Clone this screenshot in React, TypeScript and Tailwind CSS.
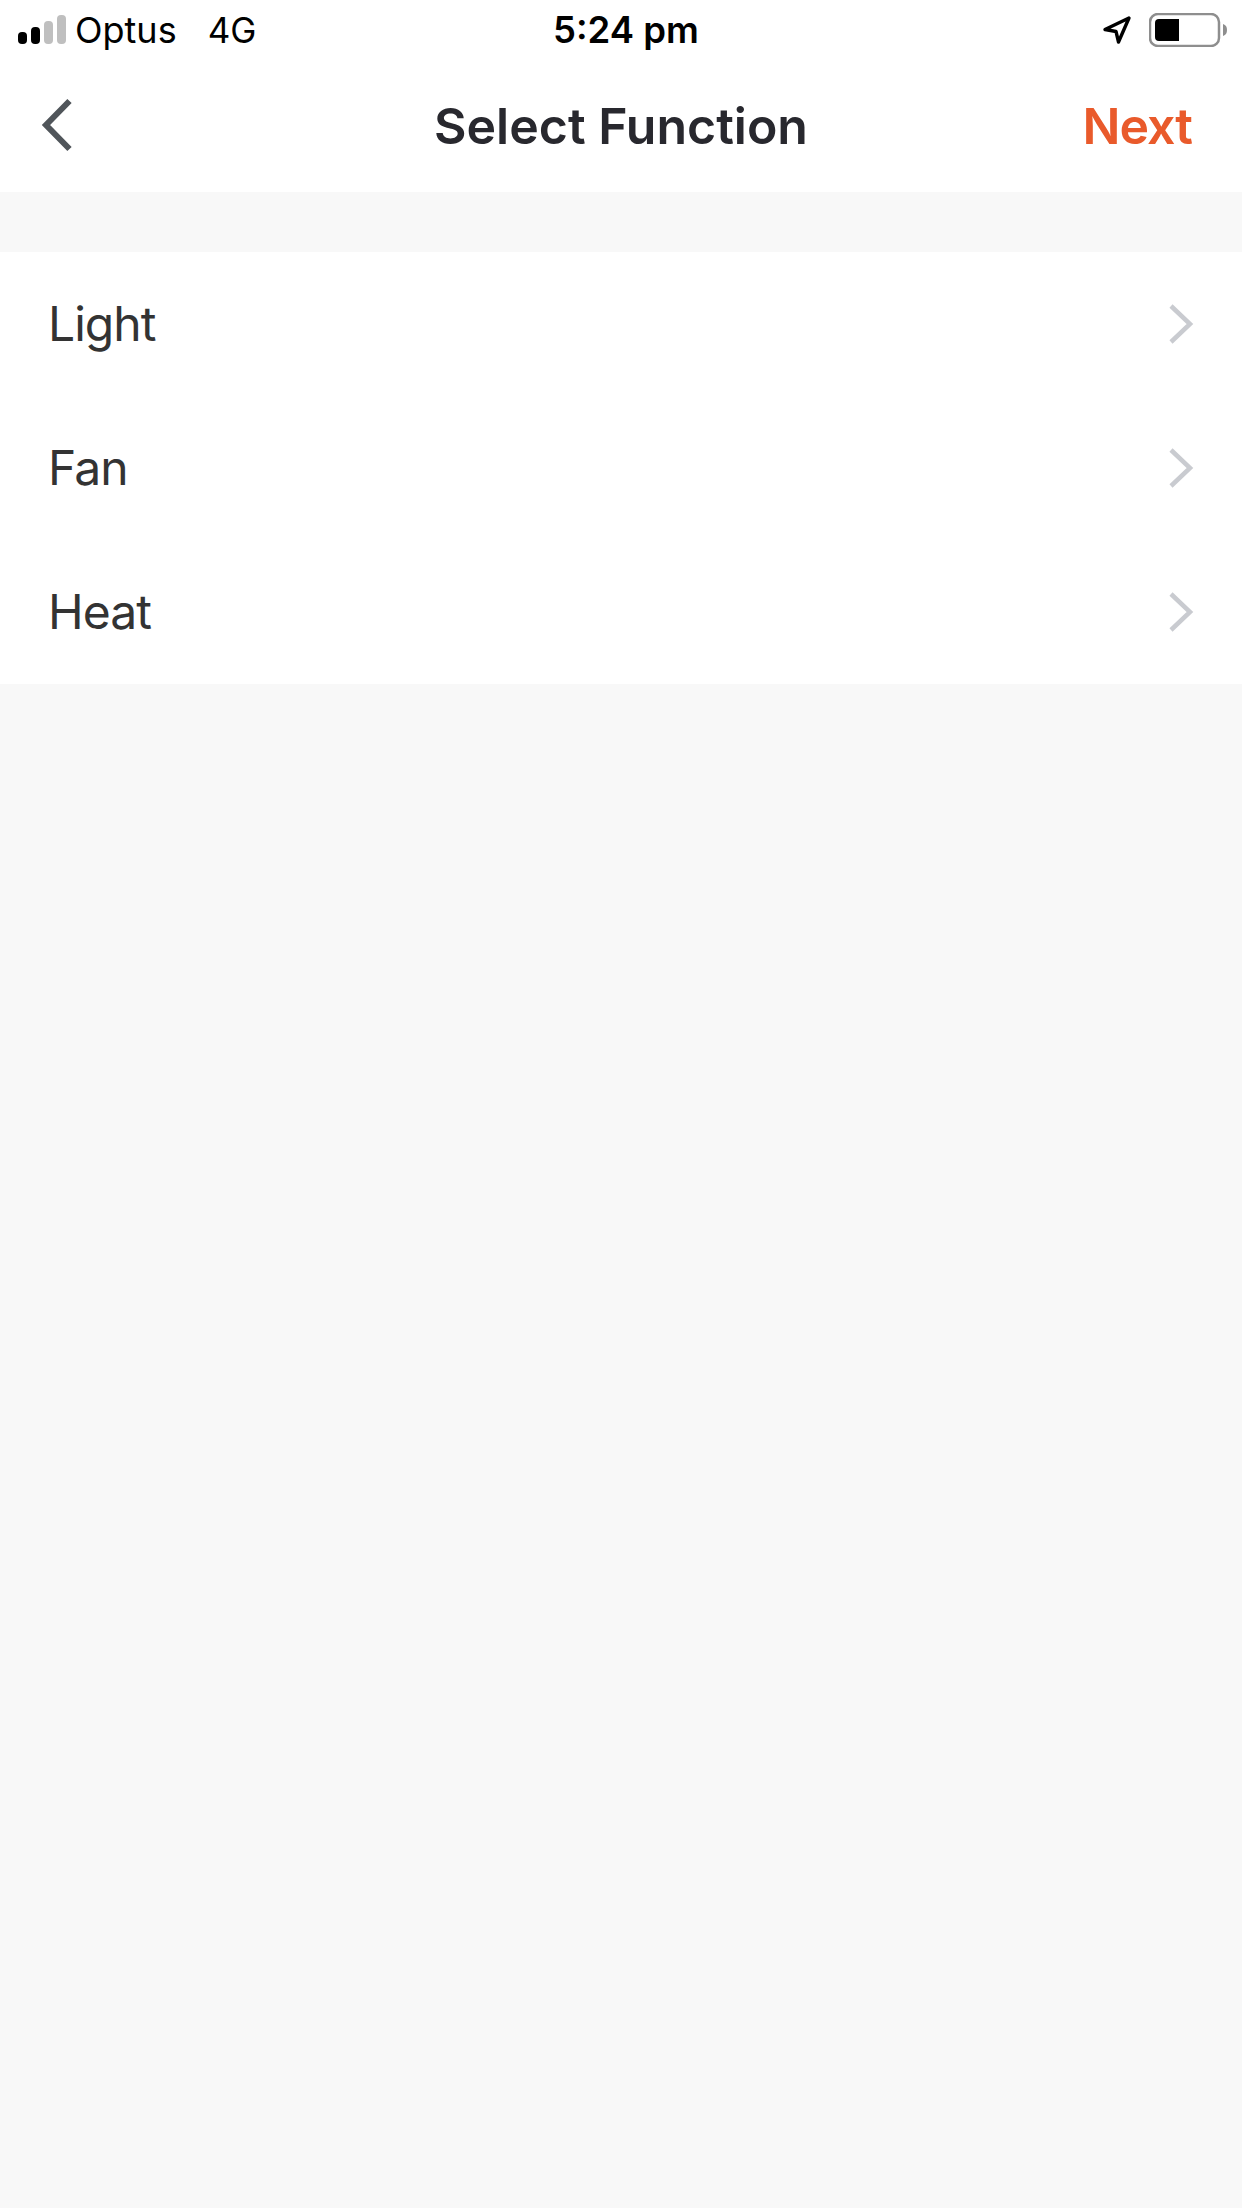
const font = { fontFamily: "Inter, sans-serif" };

function Signal() {
    return (
        <svg width="49" height="30" viewBox="0 0 49 30" className="block">
            <rect x="0" y="17" width="9" height="12" rx="4" fill="#000" />
            <rect x="13" y="12" width="9" height="17" rx="4" fill="#000" />
            <rect x="26" y="6" width="9" height="23" rx="4" fill="#bfbfbf" />
            <rect x="39" y="0" width="9" height="29" rx="4" fill="#bfbfbf" />
        </svg>
    );
}

function LocationArrow() {
    return (
        <svg width="30" height="30" viewBox="0 0 30 30" className="block">
            <path d="M27 3 L3 14.5 L14 16.5 L16.5 27 Z" fill="none" stroke="#000" strokeWidth="3.4" strokeLinejoin="round" />
        </svg>
    );
}

function Battery() {
    return (
        <svg width="79" height="34" viewBox="0 0 79 34" className="block">
            <rect x="1" y="1" width="69" height="32" rx="8" fill="none" stroke="#8e8e8e" strokeWidth="2.5" />
            <path d="M6 10 a4 4 0 0 1 4 -4 H30 V28 H10 a4 4 0 0 1 -4 -4 Z" fill="#000" />
            <path d="M74 11 C77 12 78 14 78 17 C78 20 77 22 74 23 Z" fill="#8e8e8e" />
        </svg>
    );
}

function ChevronRow({ label }: { label: string }) {
    return (
        <div className="flex h-[144px] items-center justify-between pl-[48px] pr-[48px]">
            <span className="text-[48px] leading-none tracking-[-0.02em] text-[#333333]">{label}</span>
            <svg width="26" height="42" viewBox="0 0 26 42" className="block">
                <path d="M3 3 L22 21 L3 39" fill="none" stroke="#c9cbd0" strokeWidth="4.5" />
            </svg>
        </div>
    );
}

export default function App() {
    return (
        <div style={font} className="flex h-[2208px] w-[1242px] flex-col overflow-hidden bg-[#f8f8f8]">
            <div className="bg-white">
                {/* Status bar */}
                <div className="grid h-[60px] grid-cols-[1fr_auto_1fr] items-center pl-[18px] pr-[14px] text-black">
                    <div className="flex items-center">
                        <Signal />
                        <span className="ml-[8px] text-[36px] leading-none">Optus</span>
                        <span className="ml-[31px] text-[35px] leading-none">4G</span>
                    </div>
                    <span className="ml-[6px] text-[36.5px] font-semibold leading-none">5:24 pm</span>
                    <div className="flex items-center justify-end gap-[17px]">
                        <LocationArrow />
                        <Battery />
                    </div>
                </div>

                {/* Nav bar */}
                <div className="grid h-[132px] grid-cols-[1fr_auto_1fr] items-center pl-[40px] pr-[40px]">
                    <svg width="34" height="58" viewBox="0 0 34 58" className="block">
                        <path d="M29.5 4 L6 28 L29.5 52" fill="none" stroke="#50555a" strokeWidth="6" />
                    </svg>
                    <span className="text-[50px] font-semibold leading-none text-[#28282e]">Select Function</span>
                    <span className="mr-[10px] justify-self-end text-[50px] font-semibold leading-none tracking-[-0.02em] text-[#e95a2b]">Next</span>
                </div>
            </div>

            {/* Function list */}
            <div className="mt-[60px] bg-white">
                <ChevronRow label="Light" />
                <ChevronRow label="Fan" />
                <ChevronRow label="Heat" />
            </div>
        </div>
    );
}
